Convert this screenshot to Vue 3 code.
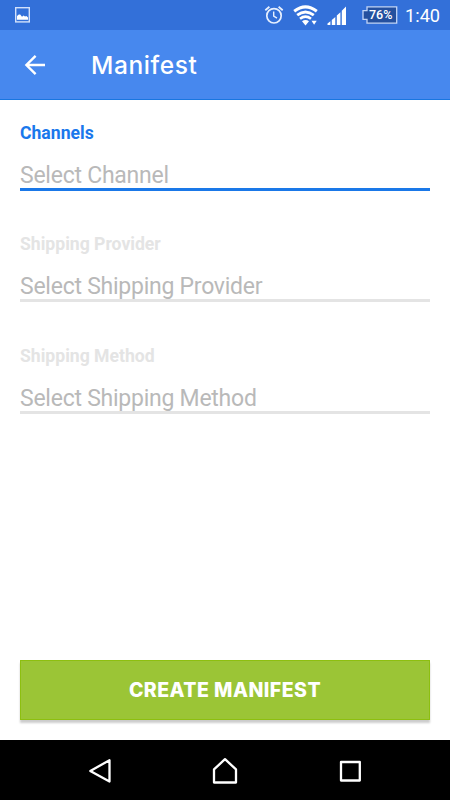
<script setup>
const fields = [
  { label: 'Channels', placeholder: 'Select Channel', active: true },
  { label: 'Shipping Provider', placeholder: 'Select Shipping Provider', active: false },
  { label: 'Shipping Method', placeholder: 'Select Shipping Method', active: false },
]
</script>

<template>
  <div class="screen">
    <div class="status">
      <svg class="picture" width="16" height="16" viewBox="0 0 16 16">
        <rect x="0.7" y="0.7" width="13.6" height="14.2" fill="none" stroke="#d3e1fb" stroke-width="1.4" />
        <path d="M2 12.8V9L3.8 7.6L5.2 7.6L7 9.8L8.6 8.6L10 9.6L11.4 9L13 10.6V12.8Z" fill="#fff" />
      </svg>
      <svg class="alarm" width="20" height="20" viewBox="0 0 20 20" fill="none" stroke="#e6effe">
        <circle cx="10" cy="10.8" r="7.2" stroke-width="1.7" />
        <path d="M1.3 5.2L5.4 1.7M14.6 1.7L18.7 5.2" stroke-width="1.8" />
        <path d="M9.7 6.5V11.2L13 13.2" stroke-width="1.4" />
      </svg>
      <svg class="wifi" width="26" height="22" viewBox="0 0 26 22" fill="none" stroke="#fff">
        <path d="M1.2 6.2Q12.5 -2.5 23.8 6.2" stroke-width="3" />
        <path d="M4.2 10.2Q12.5 3.7 20.8 10.2" stroke-width="2.8" />
        <path d="M7 13.7Q12.5 9.5 18 13.7" stroke-width="2.6" />
        <path d="M9 16.2Q12.5 13.7 16 16.2L12.5 20.5Z" fill="#fff" stroke="none" />
        <path d="M18.5 15.8H23.7L21.1 19.8Z" fill="#fff" stroke="none" />
      </svg>
      <svg class="signal" width="20" height="20" viewBox="0 0 20 20" fill="#fff">
        <path d="M0.5 19V17.6L3.4 15.2V19ZM4.8 19V14L8.3 11V19ZM9.8 19V9.5L13.4 6.2V19ZM14.8 19V4.8L19 0.6V19Z" />
      </svg>
      <div class="battery">
        <svg width="36" height="18" viewBox="0 0 36 18">
          <path d="M5 0.8H34.7V17.2H5V13.4H1V4.6H5Z" fill="#24509f" stroke="#c2d5f7" stroke-width="1.3" />
        </svg>
        <span>76%</span>
      </div>
      <span class="clock">1:40</span>
    </div>
    <header class="bar">
      <svg class="back" width="22" height="22" viewBox="0 0 22 22" fill="none" stroke="#fff" stroke-width="2.4">
        <path d="M21 11H2.8M11.6 1.8L2.4 11L11.6 20.2" />
      </svg>
      <h1>Manifest</h1>
    </header>
    <main>
      <div v-for="f in fields" :key="f.label" class="field" :class="{ active: f.active }">
        <label>{{ f.label }}</label>
        <div class="value">{{ f.placeholder }}</div>
      </div>
      <button>CREATE MANIFEST</button>
    </main>
    <nav>
      <svg width="26" height="28" viewBox="0 0 26 28"><path d="M22.5 3.2V24.6L3.3 14Z" /></svg>
      <svg width="26" height="28" viewBox="0 0 26 28"><path d="M13 2.2L24 12.3V25.5H2V12.3Z" /></svg>
      <svg width="26" height="28" viewBox="0 0 26 28"><path d="M4 5H22.8V23.5H4Z" /></svg>
    </nav>
  </div>
</template>

<style>
body { margin: 0; }
</style>

<style scoped>
.screen {
  width: 450px;
  height: 800px;
  display: flex;
  flex-direction: column;
  background: #fff;
  font-family: Roboto, sans-serif;
  overflow: hidden;
}
svg { display: block; flex: none; }
.status {
  height: 30px;
  flex: none;
  display: flex;
  align-items: center;
  background: #3370d9;
  color: #fff;
}
.picture { margin-left: 15px; }
.alarm { margin-left: 233px; }
.wifi { margin: 2px 0 0 9px; }
.signal { margin: 2px 0 0 8px; }
.battery { position: relative; margin-left: 15px; }
.battery span {
  position: absolute;
  left: 7px;
  top: 0;
  font-size: 12.5px;
  line-height: 18px;
  font-weight: 500;
}
.clock { margin: 2px 0 0 7px; font-size: 18.2px; line-height: 24px; white-space: nowrap; }
.bar {
  height: 70px;
  flex: none;
  box-sizing: border-box;
  display: flex;
  align-items: center;
  background: #4788ee;
  border-bottom: 1px solid #1976e0;
  color: #fff;
}
.back { margin-left: 24px; }
h1 {
  margin: 0 0 0 45px;
  font: 500 24.5px/30px Inter, sans-serif;
  letter-spacing: 0.6px;
}
main { flex: 1; display: flex; flex-direction: column; padding: 20px; }
.field { height: 111.3px; flex: none; color: #e4e4e4; }
label { display: block; height: 26px; font-size: 17.6px; line-height: 26px; font-weight: 700; }
.value {
  height: 25px;
  margin-top: 17px;
  color: #b9b9b9;
  font-size: 23px;
  line-height: 26px;
  letter-spacing: -0.25px;
  border-bottom: 3px solid #e4e4e4;
}
.active label { color: #1a78ec; }
.active .value { border-color: #1a78e8; }
button {
  margin: auto 0 0;
  height: 60px;
  flex: none;
  padding: 0;
  border: 1px solid #8dbf10;
  background: #9bc536;
  box-shadow: 0 3px 2px rgba(0, 0, 0, 0.2);
  color: #fff;
  font: 800 19.5px/58px Inter, sans-serif;
  letter-spacing: 0.47px;
}
nav {
  height: 60px;
  flex: none;
  box-sizing: border-box;
  display: flex;
  align-items: center;
  justify-content: space-between;
  padding: 2px 87px 0;
  background: #000;
}
nav path { fill: none; stroke: #fff; stroke-width: 2.3; stroke-linejoin: round; }
</style>
